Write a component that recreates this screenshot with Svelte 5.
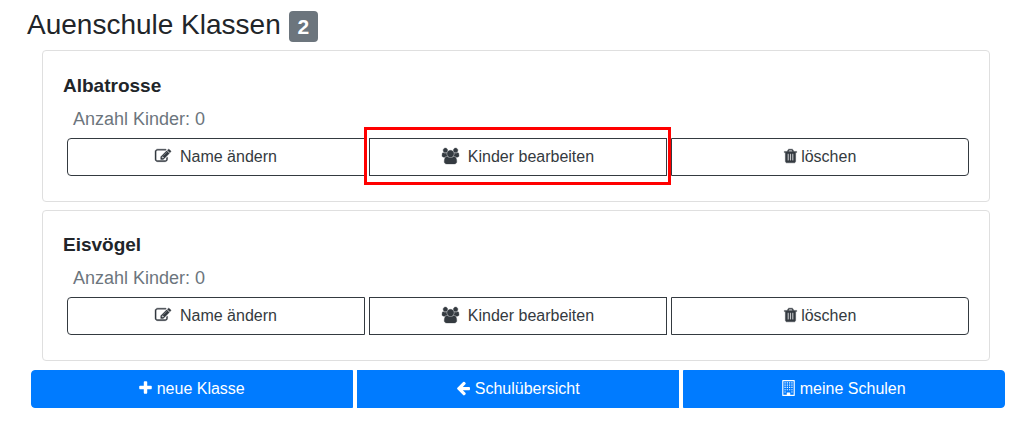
<script>
  const classes = [
    { name: 'Albatrosse', children: 0, highlighted: true },
    { name: 'Eisvögel', children: 0, highlighted: false }
  ];

  const icons = {
    edit: {
      box: '0 0 1792 1792',
      size: 'w16',
      d: 'M888 1184l116-116-152-152-116 116v56h96v96h56zm440-720q-16-16-33 1l-350 350q-17 17-1 33t33-1l350-350q17-17 1-33zm80 594v190q0 119-84.5 203.5t-203.5 84.5h-832q-119 0-203.5-84.5t-84.5-203.5v-832q0-119 84.5-203.5t203.5-84.5h832q63 0 117 25 15 7 18 23 3 17-9 29l-49 49q-14 14-32 8-23-6-45-6h-832q-66 0-113 47t-47 113v832q0 66 47 113t113 47h832q66 0 113-47t47-113v-126q0-13 9-22l64-64q15-15 35-7t20 29zm-96-738l288 288-672 672h-288v-288zm444 132l-92 92-288-288 92-92q28-28 68-28t68 28l152 152q28 28 28 68t-28 68z'
    },
    users: {
      box: '0 0 1920 1792',
      size: 'w17',
      d: 'M593 896q-162 5-265 128h-134q-82 0-138-40.5t-56-118.5q0-353 124-353 6 0 43.5 21t97.5 42.5 119 21.5q67 0 133-23-5 37-5 66 0 139 81 256zm1071 637q0 120-73 189.5t-194 69.5h-874q-121 0-194-69.5t-73-189.5q0-53 3.5-103.5t14-109 26.5-108.5 43-97.5 62-81 85.5-53.5 111.5-20q10 0 43 21.5t73 48 107 48 135 21.5 135-21.5 107-48 73-48 43-21.5q61 0 111.5 20t85.5 53.5 62 81 43 97.5 26.5 108.5 14 109 3.5 103.5zm-1024-1277q0 106-75 181t-181 75-181-75-75-181 75-181 181-75 181 75 75 181zm704 384q0 159-112.5 271.5t-271.5 112.5-271.5-112.5-112.5-271.5 112.5-271.5 271.5-112.5 271.5 112.5 112.5 271.5zm576 225q0 78-56 118.5t-138 40.5h-134q-103-123-265-128 81-117 81-256 0-29-5-66 66 23 133 23 59 0 119-21.5t97.5-42.5 43.5-21q124 0 124 353zm-128-609q0 106-75 181t-181 75-181-75-75-181 75-181 181-75 181 75 75 181z'
    },
    trash: {
      box: '192 0 1408 1792',
      size: 'w13',
      d: 'M704 1376v-704q0-14-9-23t-23-9h-64q-14 0-23 9t-9 23v704q0 14 9 23t23 9h64q14 0 23-9t9-23zm256 0v-704q0-14-9-23t-23-9h-64q-14 0-23 9t-9 23v704q0 14 9 23t23 9h64q14 0 23-9t9-23zm256 0v-704q0-14-9-23t-23-9h-64q-14 0-23 9t-9 23v704q0 14 9 23t23 9h64q14 0 23-9t9-23zm-544-992h448l-48-117q-7-9-17-11h-317q-10 2-17 11zm928 32v64q0 14-9 23t-23 9h-96v948q0 83-47 143.5t-113 60.5h-832q-66 0-113-58.5t-47-141.5v-952h-96q-14 0-23-9t-9-23v-64q0-14 9-23t23-9h309l70-167q15-37 54-63t79-26h320q40 0 79 26t54 63l70 167h309q14 0 23 9t9 23z'
    },
    plus: {
      box: '192 0 1408 1792',
      size: 'w13',
      d: 'M1600 736v192q0 40-28 68t-68 28h-416v416q0 40-28 68t-68 28h-192q-40 0-68-28t-28-68v-416h-416q-40 0-68-28t-28-68v-192q0-40 28-68t68-28h416v-416q0-40 28-68t68-28h192q40 0 68 28t28 68v416h416q40 0 68 28t28 68z'
    },
    back: {
      box: '64 0 1600 1792',
      size: 'w14',
      d: 'M1664 896v128q0 53-32.5 90.5t-84.5 37.5h-704l293 294q38 36 38 90t-38 90l-75 76q-37 37-90 37-52 0-91-37l-651-652q-37-37-37-90 0-52 37-91l651-650q38-38 91-38 52 0 90 38l75 74q38 38 38 91t-38 91l-293 293h704q52 0 84.5 37.5t32.5 90.5z'
    },
    building: {
      box: '0 0 1408 1792',
      size: 'w13',
      d:
        'M64 0h1280q26 0 45 19t19 45v1664q0 26-19 45t-45 19h-1280q-26 0-45-19t-19-45v-1664q0-26 19-45t45-19zM896 1664h384v-1536h-1152v1536h384v-224q0-13 9.5-22.5t22.5-9.5h320q13 0 22.5 9.5t9.5 22.5z' +
        [256, 512, 768, 1024, 1280]
          .flatMap((y) => (y === 1280 ? [256, 1024] : [256, 512, 768, 1024]).map((x) => `M${x} ${y}h128v128h-128z`))
          .join('')
    }
  };
</script>

{#snippet icon(name)}
  <svg class="icon {icons[name].size}" viewBox={icons[name].box} aria-hidden="true">
    <path fill-rule="evenodd" d={icons[name].d} />
  </svg>
{/snippet}

<main>
  <h1>Auenschule Klassen <span class="badge">{classes.length}</span></h1>

  <div class="cards">
    {#each classes as item}
      <section class="card">
        <h2>{item.name}</h2>
        <p>Anzahl Kinder: {item.children}</p>
        <div class="group outline">
          <button type="button">{@render icon('edit')}&nbsp; Name ändern</button>
          <button type="button" class:highlighted={item.highlighted}>{@render icon('users')}&nbsp; Kinder bearbeiten</button>
          <button type="button">{@render icon('trash')} löschen</button>
        </div>
      </section>
    {/each}
  </div>

  <div class="group primary">
    <button type="button">{@render icon('plus')} neue Klasse</button>
    <button type="button">{@render icon('back')} Schulübersicht</button>
    <button type="button">{@render icon('building')} meine Schulen</button>
  </div>
</main>

<style>
  :global(body) {
    margin: 0;
    background: #fff;
    color: #212529;
    font-family: 'Liberation Sans', Arial, sans-serif;
    font-size: 16px;
    line-height: 24px;
  }

  main {
    padding: 8px 17px 24px 27px;
  }

  h1 {
    margin: 0 0 8px;
    font-size: 28px;
    font-weight: 400;
    line-height: 34px;
  }

  .badge {
    display: inline-block;
    padding: 5px 9px;
    border-radius: 4px;
    background: #6c757d;
    color: #fff;
    font-size: 21px;
    font-weight: 700;
    line-height: 21px;
    vertical-align: baseline;
  }

  .cards {
    display: flex;
    flex-direction: column;
    gap: 8px;
    margin: 0 19px 9px 15px;
  }

  .card {
    padding: 21px 20px 25px;
    border: 1px solid #dfdfdf;
    border-radius: 4px;
  }

  .card + .card {
    padding-top: 20px;
  }

  h2 {
    margin: 0 0 6px;
    font-size: 19px;
    line-height: 28px;
  }

  p {
    margin: 0 10px 5px;
    color: #6c757d;
    font-size: 18px;
    line-height: 27px;
  }

  .group {
    display: grid;
    grid-template-columns: repeat(3, 1fr);
    gap: 4px;
    margin: 0 4px;
  }

  .outline {
    margin-right: 0;
  }

  button {
    position: relative;
    padding: 6px 12px;
    border: 1px solid #007bff;
    border-radius: 0;
    background: #007bff;
    color: #fff;
    font: inherit;
    cursor: pointer;
  }

  button:first-child {
    border-radius: 4px 0 0 4px;
  }

  button:last-child {
    border-radius: 0 4px 4px 0;
  }

  .outline button {
    border-color: #343a40;
    background: #fff;
    color: #343a40;
  }

  .highlighted {
    z-index: 1;
  }

  .highlighted::after {
    content: '';
    position: absolute;
    inset: -12px -5px -10px -6px;
    border: 3px solid #f00;
  }

  .icon {
    height: 16px;
    overflow: visible;
    fill: currentColor;
    vertical-align: -2px;
  }

  .outline .icon {
    stroke: currentColor;
    stroke-width: 40;
  }

  .w13 {
    width: 13px;
  }

  .w14 {
    width: 14px;
  }

  .w16 {
    width: 16px;
  }

  .w17 {
    width: 17px;
  }
</style>
